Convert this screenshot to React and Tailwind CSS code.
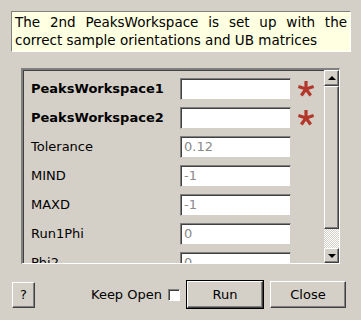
const font = { fontFamily: '"DejaVu Sans", Verdana, sans-serif' };

const rows = [
  { label: 'PeaksWorkspace1', bold: true, value: '', required: true },
  { label: 'PeaksWorkspace2', bold: true, value: '', required: true },
  { label: 'Tolerance', value: '0.12' },
  { label: 'MIND', value: '-1' },
  { label: 'MAXD', value: '-1' },
  { label: 'Run1Phi', value: '0' },
  { label: 'Phi2', value: '0' },
];

const Asterisk = () => (
  <svg width="18" height="18" viewBox="0 0 18 18" className="shrink-0">
    <g stroke="#b2372a" strokeWidth="3.2" strokeLinecap="butt">
      <line x1="9" y1="9" x2="9" y2="1" />
      <line x1="9" y1="9" x2="1.4" y2="6.5" />
      <line x1="9" y1="9" x2="16.6" y2="6.5" />
      <line x1="9" y1="9" x2="4.3" y2="15.5" />
      <line x1="9" y1="9" x2="13.7" y2="15.5" />
    </g>
  </svg>
);

const ArrowUp = () => (
  <div className="w-0 h-0 border-l-[4px] border-r-[4px] border-b-[4px] border-l-transparent border-r-transparent border-b-black" />
);

const ArrowDown = () => (
  <div className="w-0 h-0 border-l-[4px] border-r-[4px] border-t-[4px] border-l-transparent border-r-transparent border-t-black" />
);

const raised =
  'border border-t-white border-l-white border-b-[#404040] border-r-[#404040] shadow-[inset_-1px_-1px_0_#808080]';

export default function App() {
  return (
    <div className="w-[361px] h-[320px] bg-[#d4d0c8] flex flex-col overflow-hidden text-[13px] text-black" style={font}>
      <div className="ml-[11px] mt-[11px] w-[340px] h-[41px] bg-[#ffffe1] border border-t-[#808080] border-l-[#808080] border-b-white border-r-white pl-[3px] pr-[3px] pt-[1px] text-[13.5px] leading-[18px] text-justify">
        The 2nd PeaksWorkspace is set up with the correct sample orientations and UB matrices
      </div>

      <div className="ml-[21px] mt-[16px] w-[319px] h-[196px] flex border-t-2 border-l-2 border-b border-r border-t-[#808080] border-l-[#808080] border-b-white border-r-white shadow-[inset_1px_1px_0_#404040]">
        <div className="flex-1 overflow-hidden pl-[8px] pt-[8px] flex flex-col gap-[7px]">
          {rows.map((r) => (
            <div key={r.label} className="flex items-center h-[22px] shrink-0">
              <div className={`w-[149px] ${r.bold ? 'font-bold' : ''}`}>{r.label}</div>
              <div className="w-[111px] h-[22px] bg-white border border-t-[#808080] border-l-[#808080] border-b-[#d4d0c8] border-r-[#d4d0c8] shadow-[inset_1px_1px_0_#404040] pl-[3px] flex items-center text-[#8a8a8a]">
                {r.value}
              </div>
              {r.required && (
                <div className="ml-[6px]">
                  <Asterisk />
                </div>
              )}
            </div>
          ))}
        </div>
        <div className="w-[15px] flex flex-col">
          <div className={`h-[16px] bg-[#d4d0c8] flex items-center justify-center ${raised}`}>
            <ArrowUp />
          </div>
          <div className={`h-[143px] bg-[#d4d0c8] ${raised}`} />
          <div className="flex-1 bg-[image:repeating-conic-gradient(#ffffff_0%_25%,#d4d0c8_0%_50%)] bg-[length:2px_2px]" />
          <div className={`h-[15px] bg-[#d4d0c8] flex items-center justify-center ${raised}`}>
            <ArrowDown />
          </div>
        </div>
      </div>

      <div className="mt-[16px] flex items-center">
        <button className={`ml-[12px] w-[23px] h-[26px] flex items-center justify-center ${raised}`}>?</button>
        <span className="ml-[56px]">Keep Open</span>
        <div className="ml-[6px] w-[12px] h-[12px] bg-white border border-t-[#808080] border-l-[#808080] border-b-white border-r-white shadow-[inset_1px_1px_0_#404040]" />
        <div className="ml-[6px] w-[78px] h-[29px] border border-black">
          <button className={`w-full h-full flex items-center justify-center ${raised}`}>Run</button>
        </div>
        <button className={`ml-[6px] w-[76px] h-[27px] flex items-center justify-center ${raised}`}>Close</button>
      </div>
    </div>
  );
}
